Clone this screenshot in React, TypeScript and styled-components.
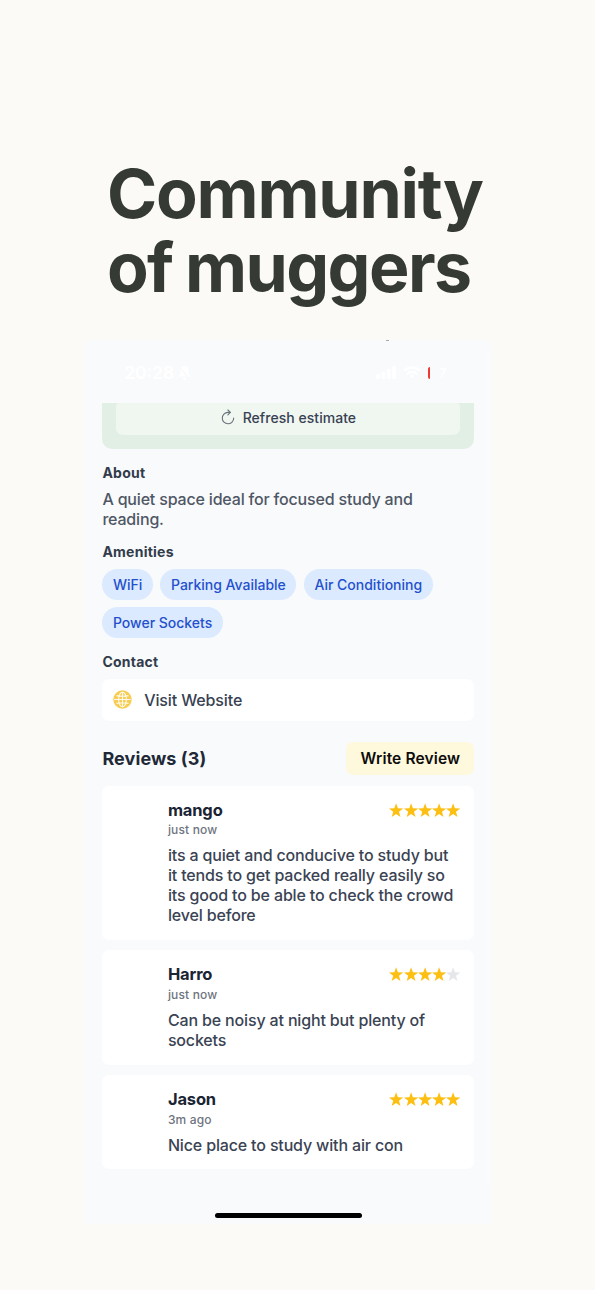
import React from "react";
import styled, { createGlobalStyle } from "styled-components";

const GlobalStyle = createGlobalStyle`
  * { box-sizing: border-box; }
  body { margin: 0; background: #fbfaf6; font-family: Inter, "Liberation Sans", sans-serif; }
  h1, h2, h3, p { margin: 0; }
`;

const Page = styled.main`
  width: 595px;
  height: 1290px;
  padding: 156px 0 0 84px;
  overflow: hidden;
  background: #fbfaf6;
`;

const Headline = styled.h1`
  height: 184px;
  padding-left: 23px;
  color: #353a35;
  font-size: 68px;
  font-weight: 700;
  line-height: 74.3px;
  white-space: nowrap;
`;

const HeadlineLine = styled.span<{ $tracking: number }>`
  display: block;
  letter-spacing: ${(p) => p.$tracking}px;
  word-spacing: -2px;
`;

const Screen = styled.section`
  position: relative;
  display: flex;
  flex-direction: column;
  width: 408px;
  height: 884px;
  padding: 0 17.6px 0 18.4px;
  border-radius: 8px 8px 0 0;
  background: #f9fafc;
`;

const EdgeLight = styled.span`
  position: absolute;
  top: 10px;
  right: 2px;
  width: 3px;
  height: 835px;
  background: #fbfbfd;
`;

const Speck = styled.span`
  position: absolute;
  top: 0;
  left: 302px;
  width: 3px;
  height: 1px;
  background: #a9a9a9;
`;

const StatusBar = styled.header`
  display: flex;
  justify-content: space-between;
  height: 63px;
  padding: 21px 20px 0 22px;
  color: #fff;
`;

const StatusGroup = styled.div<{ $gap: number }>`
  display: flex;
  align-items: center;
  gap: ${(p) => p.$gap}px;
  height: 23px;
  font-size: 17px;
  font-weight: 700;
`;

const Battery = styled.span`
  display: flex;
  align-items: center;
  gap: 9px;
  width: 26px;
  height: 12px;
  font-size: 12px;
`;

const BatteryLevel = styled.span`
  width: 2px;
  height: 12px;
  border-radius: 2px 0 0 2px;
  background: #ee3a32;
`;

const EstimateCard = styled.div`
  height: 45.5px;
  padding: 0 14px 13.5px;
  border-radius: 0 0 10px 10px;
  background: #e1efe5;
`;

const RefreshButton = styled.div`
  display: flex;
  align-items: center;
  justify-content: center;
  gap: 8px;
  height: 32px;
  padding-bottom: 3.5px;
  border-radius: 4px 4px 7px 7px;
  background: #f0f7f1;
  color: #374151;
  font-size: 14px;
  font-weight: 500;
  letter-spacing: 0.04px;
`;

const SectionTitle = styled.h3<{ $top: number }>`
  margin-top: ${(p) => p.$top}px;
  color: #323c4b;
  font-size: 14px;
  font-weight: 700;
  line-height: 18px;
  letter-spacing: 0.24px;
`;

const Description = styled.p`
  margin-top: 8px;
  color: #4f5765;
  font-size: 16px;
  font-weight: 500;
  line-height: 19.5px;
  letter-spacing: -0.18px;
`;

const Chips = styled.div`
  display: flex;
  flex-wrap: wrap;
  gap: 7.5px;
  margin-top: 8px;
`;

const Chip = styled.span`
  height: 30.5px;
  padding: 0 10.6px;
  border-radius: 16px;
  background: #dbeafe;
  color: #2450cd;
  font-size: 14px;
  font-weight: 500;
  line-height: 31.5px;
  letter-spacing: -0.01px;
  white-space: nowrap;
`;

const WebsiteRow = styled.div`
  display: flex;
  align-items: center;
  gap: 12px;
  height: 42px;
  margin-top: 8px;
  padding-left: 10.8px;
  border-radius: 7px;
  background: #fff;
  color: #374151;
  font-size: 16px;
  font-weight: 500;
  letter-spacing: -0.12px;
`;

const ReviewsHeader = styled.div`
  display: flex;
  align-items: center;
  justify-content: space-between;
  height: 33.5px;
  margin-top: 21px;
`;

const ReviewsTitle = styled.h2`
  color: #1f2937;
  font-size: 18px;
  font-weight: 700;
  letter-spacing: 0.08px;
`;

const WriteButton = styled.div`
  width: 128px;
  height: 33.5px;
  border-radius: 7px;
  background: #fef8dc;
  color: #0c0c0c;
  font-size: 15.5px;
  font-weight: 600;
  line-height: 34px;
  letter-spacing: 0.15px;
  text-align: center;
`;

const ReviewCard = styled.article<{ $height: number }>`
  height: ${(p) => p.$height}px;
  margin-top: 10.7px;
  padding: 13.5px 14px 0 65.5px;
  border-radius: 7px;
  background: #fff;
`;

const ReviewTop = styled.div`
  display: flex;
  align-items: center;
  justify-content: space-between;
  height: 21px;
`;

const Author = styled.h3`
  color: #1a2433;
  font-size: 16.5px;
  font-weight: 700;
  line-height: 20px;
  letter-spacing: -0.15px;
`;

const Time = styled.p`
  color: #6e7480;
  font-size: 12px;
  font-weight: 500;
  line-height: 20.6px;
  letter-spacing: 0.15px;
`;

const Body = styled.p`
  margin-top: 5.6px;
  color: #3a4353;
  font-size: 16px;
  font-weight: 500;
  line-height: 19.9px;
  letter-spacing: -0.155px;
  white-space: nowrap;
`;

const Stars = styled.div`
  display: flex;
  padding-top: 1px;
`;

const HomeBar = styled.div`
  position: absolute;
  bottom: 6px;
  left: 131px;
  width: 146.5px;
  height: 5.5px;
  border-radius: 3px;
  background: #000;
`;

const Star = ({ on }: { on: boolean }) => (
  <svg width="14.2" height="15" viewBox="0 0 14.2 15">
    <path
      d="M7.1 .3 8.9 5.3 14.2 5.5 10 8.8 11.5 14 7.1 11 2.7 14 4.2 8.800 0 5.500 5.300 5.300Z"
      fill={on ? "#fdbf12" : "#e5e7eb"}
    />
  </svg>
);

const BellOff = () => (
  <svg width="15" height="16" viewBox="0 0 15 16" fill="currentColor">
    <path d="M7.5 1a4 4 0 0 1 4 4v3l2 3.5H1.5L3.5 8V5a4 4 0 0 1 4-4ZM5.5 13h4a2 2 0 0 1-4 0Z" />
    <path d="M1 1 14 15" stroke="#f9fafc" strokeWidth="1.2" />
  </svg>
);

const Signal = () => (
  <svg width="20" height="13" viewBox="0 0 20 13" fill="currentColor">
    <rect y="8" width="3.8" height="5" rx="1" />
    <rect x="5.4" y="6" width="3.8" height="7" rx="1" />
    <rect x="10.800" y="3" width="3.8" height="10" rx="1" />
    <rect x="16.200" width="3.800" height="13" rx="1" />
  </svg>
);

const Wifi = () => (
  <svg width="18" height="13" viewBox="0 0 18 13" fill="none" stroke="currentColor" strokeWidth="2.5">
    <path d="M1 4.700a11.500 11.500 0 0 1 16 0M4 8a7 7 0 0 1 10 0" />
    <path d="m9 12.500-2.300-2.500a3.200 3.200 0 0 1 4.600 0Z" fill="currentColor" stroke="none" />
  </svg>
);

const Refresh = () => (
  <svg width="14" height="16" viewBox="0 0 14 16" fill="none" stroke="#69727a" strokeWidth="1.1" strokeLinecap="round" strokeLinejoin="round">
    <path d="M9.200 3.400H6.900A5.700 5.700 0 1 0 12.700 9.100" />
    <path d="M6.900 1 9.300 3.400 6.900 5.800" />
  </svg>
);

const Globe = () => (
  <svg width="19" height="19" viewBox="0 0 19 19" fill="none" stroke="#fffaf0" strokeWidth="1.1">
    <circle cx="9.500" cy="9.500" r="9.200" fill="#f7cc50" stroke="none" />
    <ellipse cx="9.500" cy="9.500" rx="3.900" ry="7.300" />
    <path d="M9.500 1.800v15.400M1.200 9.500h16.600M3.500 5.600q6 1.300 12 0M3.500 13.400q6-1.300 12 0" />
  </svg>
);

const reviews = [
  {
    author: "mango",
    time: "just now",
    rating: 5,
    height: 154,
    lines: [
      "its a quiet and conducive to study but",
      "it tends to get packed really easily so",
      "its good to be able to check the crowd",
      "level before",
    ],
  },
  { author: "Harro", time: "just now", rating: 4, height: 114.3, lines: ["Can be noisy at night but plenty of", "sockets"] },
  { author: "Jason", time: "3m ago", rating: 5, height: 94, lines: ["Nice place to study with air con"] },
];

export default function App() {
  return (
    <Page>
      <GlobalStyle />
      <Headline>
        <HeadlineLine $tracking={-1.2}>Community</HeadlineLine>
        <HeadlineLine $tracking={-1.6}>of muggers</HeadlineLine>
      </Headline>
      <Screen>
        <EdgeLight />
        <Speck />
        <StatusBar>
          <StatusGroup $gap={3}>
            20:28
            <BellOff />
          </StatusGroup>
          <StatusGroup $gap={7}>
            <Signal />
            <Wifi />
            <Battery>
              <BatteryLevel />7
            </Battery>
          </StatusGroup>
        </StatusBar>
        <EstimateCard>
          <RefreshButton>
            <Refresh />
            Refresh estimate
          </RefreshButton>
        </EstimateCard>
        <SectionTitle $top={15.5}>About</SectionTitle>
        <Description>
          A quiet space ideal for focused study and
          <br />
          reading.
        </Description>
        <SectionTitle $top={14}>Amenities</SectionTitle>
        <Chips>
          <Chip>WiFi</Chip>
          <Chip>Parking Available</Chip>
          <Chip>Air Conditioning</Chip>
          <Chip>Power Sockets</Chip>
        </Chips>
        <SectionTitle $top={15}>Contact</SectionTitle>
        <WebsiteRow>
          <Globe />
          Visit Website
        </WebsiteRow>
        <ReviewsHeader>
          <ReviewsTitle>Reviews (3)</ReviewsTitle>
          <WriteButton>Write Review</WriteButton>
        </ReviewsHeader>
        {reviews.map((r) => (
          <ReviewCard key={r.author} $height={r.height}>
            <ReviewTop>
              <Author>{r.author}</Author>
              <Stars>
                {[1, 2, 3, 4, 5].map((n) => (
                  <Star key={n} on={n <= r.rating} />
                ))}
              </Stars>
            </ReviewTop>
            <Time>{r.time}</Time>
            <Body>
              {r.lines.map((line) => (
                <React.Fragment key={line}>
                  {line}
                  <br />
                </React.Fragment>
              ))}
            </Body>
          </ReviewCard>
        ))}
        <HomeBar />
      </Screen>
    </Page>
  );
}
